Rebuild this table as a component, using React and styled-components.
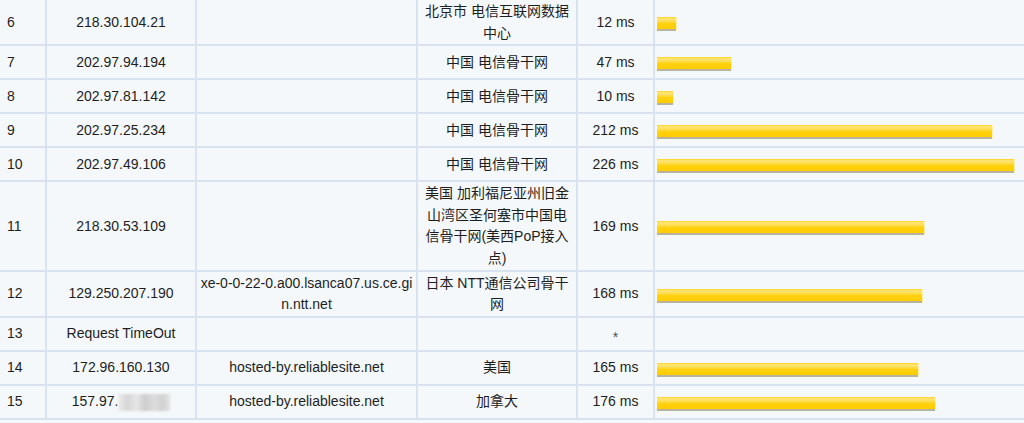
import React from "react";
import styled, { createGlobalStyle } from "styled-components";

const GlobalStyle = createGlobalStyle`
  html, body {
    margin: 0;
    padding: 0;
    background: #f4f8fa;
  }
  body {
    font-family: "Liberation Sans", "Noto Sans CJK SC", sans-serif;
    font-size: 14px;
    color: #1e1e1e;
  }
`;

const Table = styled.div`
  width: 1024px;
  height: 423px;
  overflow: hidden;
  background: #f4f8fa;
`;

const Row = styled.div`
  display: grid;
  grid-template-columns: 47px 150px 221px 160px 77px 1fr;
  min-height: 34px;
  box-sizing: border-box;
  border-bottom: 2px solid #d9e3f0;
`;

const Cell = styled.div`
  box-sizing: border-box;
  display: flex;
  align-items: center;
  justify-content: ${(p) => (p.$left ? "flex-start" : "center")};
  text-align: ${(p) => (p.$left ? "left" : "center")};
  padding: ${(p) => (p.$left ? "1px 3px 0 7px" : "1px 3px 0")};
  line-height: 21.6px;
  border-right: 2px solid #d9e3f0;
  word-break: ${(p) => (p.$breakAll ? "break-all" : "normal")};
`;

const BarCell = styled.div`
  box-sizing: border-box;
  display: flex;
  align-items: center;
  padding: 4px 0 0 2px;
`;

const Bar = styled.div`
  height: 12px;
  border-bottom: 2px solid #b8b39c;
  background: linear-gradient(
    to bottom,
    #ffd21c 0%,
    #ffe577 14%,
    #ffe060 30%,
    #ffd10f 55%,
    #ffcc00 100%
  );
  box-shadow: 1px 0 0 #fff2b0;
`;

const Masked = styled.span`
  display: inline-block;
  width: 52px;
  height: 17px;
  vertical-align: middle;
  background: linear-gradient(
    to right,
    #ededed 0%,
    #d6d6d6 18%,
    #e6e6e6 36%,
    #cdcdcd 52%,
    #dcdcdc 70%,
    #d1d1d1 86%,
    #e4e4e4 100%
  );
  filter: blur(0.8px);
`;

const Star = styled.span`
  display: inline-block;
  color: #4a5060;
  font-size: 14px;
  transform: translateY(4px);
`;

const rows = [
  { n: 6, ip: "218.30.104.21", host: "", loc: "北京市 电信互联网数据中心", ms: 12 },
  { n: 7, ip: "202.97.94.194", host: "", loc: "中国 电信骨干网", ms: 47 },
  { n: 8, ip: "202.97.81.142", host: "", loc: "中国 电信骨干网", ms: 10 },
  { n: 9, ip: "202.97.25.234", host: "", loc: "中国 电信骨干网", ms: 212 },
  { n: 10, ip: "202.97.49.106", host: "", loc: "中国 电信骨干网", ms: 226 },
  {
    n: 11,
    ip: "218.30.53.109",
    host: "",
    loc: "美国 加利福尼亚州旧金山湾区圣何塞市中国电信骨干网(美西PoP接入点)",
    ms: 169,
  },
  {
    n: 12,
    ip: "129.250.207.190",
    host: "xe-0-0-22-0.a00.lsanca07.us.ce.gin.ntt.net",
    loc: "日本 NTT通信公司骨干网",
    ms: 168,
  },
  { n: 13, ip: "Request TimeOut", host: "", loc: "", ms: null },
  { n: 14, ip: "172.96.160.130", host: "hosted-by.reliablesite.net", loc: "美国", ms: 165 },
  {
    n: 15,
    ip: "157.97.",
    masked: true,
    host: "hosted-by.reliablesite.net",
    loc: "加拿大",
    ms: 176,
  },
];

const SCALE = 1.58;

export default function App() {
  return (
    <>
      <GlobalStyle />
      <Table>
        {rows.map((r) => (
          <Row key={r.n}>
            <Cell $left>{r.n}</Cell>
            <Cell>
              <span>
                {r.ip}
                {r.masked && <Masked />}
              </span>
            </Cell>
            <Cell $breakAll>{r.host}</Cell>
            <Cell>{r.loc}</Cell>
            <Cell>{r.ms === null ? <Star>*</Star> : `${r.ms} ms`}</Cell>
            <BarCell>
              {r.ms !== null && (
                <Bar style={{ width: `${Math.round(r.ms * SCALE)}px` }} />
              )}
            </BarCell>
          </Row>
        ))}
      </Table>
    </>
  );
}
